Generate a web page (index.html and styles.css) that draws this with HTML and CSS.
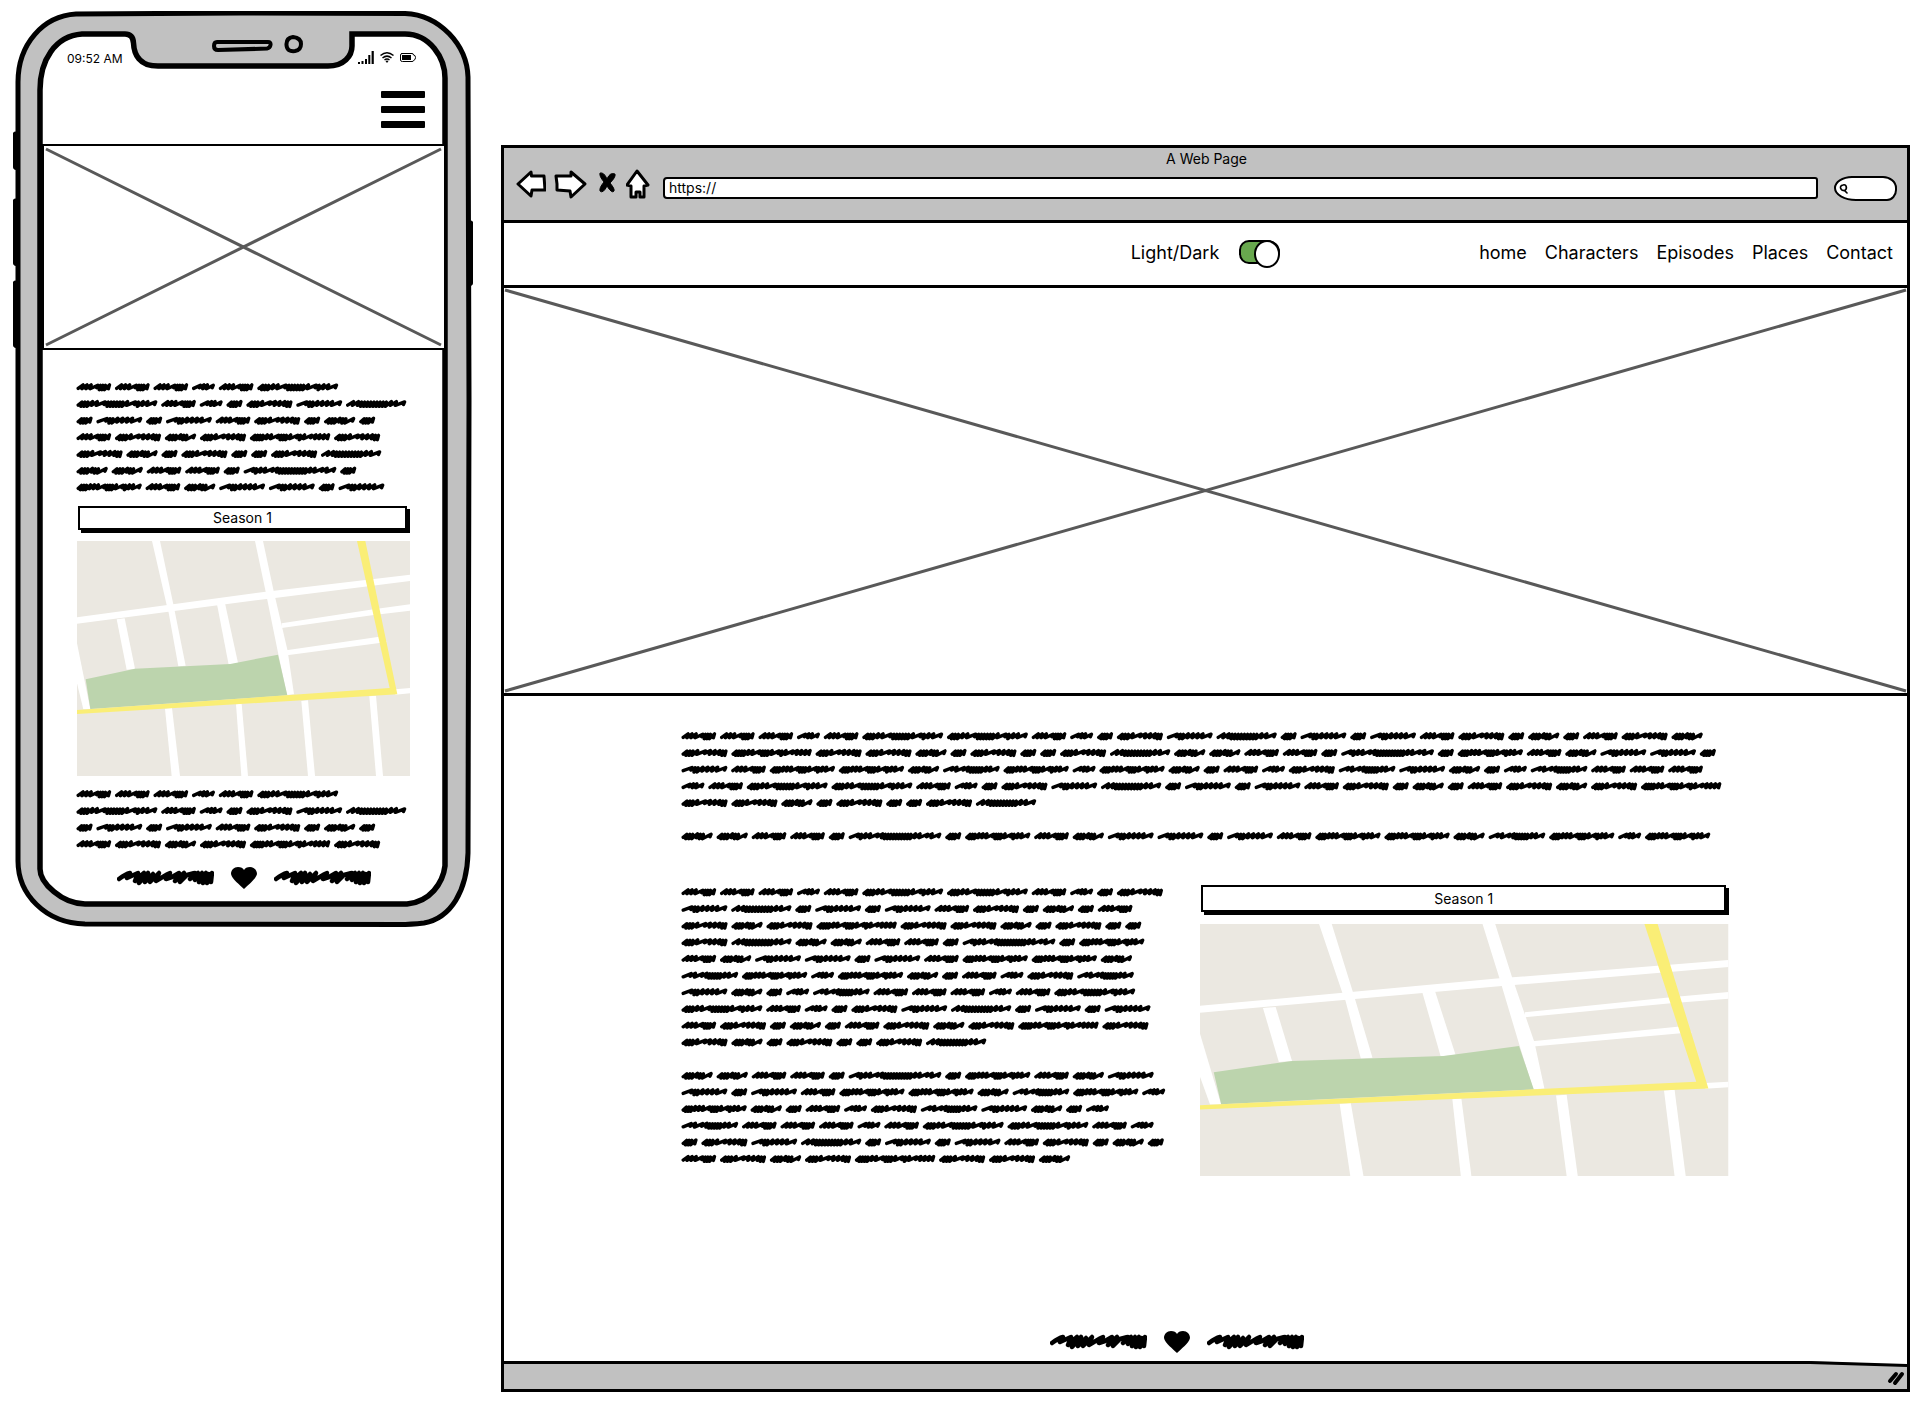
FILE: index.html
```html
<!DOCTYPE html>
<html lang="en">
<head>
<meta charset="utf-8">
<meta name="viewport" content="width=device-width, initial-scale=1">
<title>A Web Page</title>
<link rel="stylesheet" href="styles.css">
</head>
<body>
<svg class="defs" aria-hidden="true">
  <symbol id="map" viewBox="0 0 999 705" preserveAspectRatio="none">
    <rect width="999" height="705" fill="#ebe8e1"/>
    <g fill="#fff">
      <path d="M225 0H249L289 190 326 374 304 376 275 215 269 192Z"/>
      <path d="M534 0H558L590 150 632 330 651 460 630 462 604 340 566 152Z"/>
      <path d="M0 229L566 152 999 101V120L576 173 0 248Z"/>
      <path d="M614 247L890 205 999 190V209L890 222 614 261Z"/>
      <path d="M628 328L907 287 930 303 630 343Z"/>
      <path d="M119 235L143 232 174 383 149 386Z"/>
      <path d="M420 190L444 187 483 366 455 371Z"/>
      <path d="M0 307L40 505H19L0 427Z"/>
      <path d="M264 503L285 501 309 705H284Z"/>
      <path d="M477 490L494 488 513 705H493Z"/>
      <path d="M673 480L693 478 714 705H693Z"/>
      <path d="M877 466L897 464 918 705H897Z"/>
      <path d="M955 445L999 441V457L955 461Z"/>
    </g>
    <path d="M26 415L174 383 460 369 603 341 631 463 40 504Z" fill="#bcd4ad"/>
    <path d="M840 0H865L961 460 0 519V507L938 441Z" fill="#faee76"/>
  </symbol>
  <symbol id="heart" viewBox="0 0 26 22">
    <path d="M13 22C9 18 1 12 0 7C0 3 3 0 7 0C10 0 12 1 13 3C14 1 16 0 19 0C23 0 26 3 26 7C25 12 17 18 13 22Z"/>
  </symbol>
  <symbol id="mark" viewBox="0 0 97 16">
    <path fill="none" stroke="#000" stroke-width="4.500" stroke-linecap="round" stroke-linejoin="round" d="M2 9C6 6 9 4 13 3L10 8 21 3 18 11 27 3 22 13 31 3 28 12 36 4 33 12 42 3 39 11C45 8 48 5 53 3L49 9 55 7 62 3 58 11 67 3 63 12 70 5C74 4 76 3 78 3L73 9 81 3 78 10 85 3 82 12 89 3 86 13 92 4 90 13 95 3 94 12"/>
  </symbol>
</svg>

<main class="board">
  <section class="phone" aria-label="Mobile layout">
    <svg class="phone-frame" viewBox="13 11 460 915" preserveAspectRatio="none" aria-hidden="true">
      <path d="M13 133Q13 131 18 131V170Q13 170 13 167ZM13 200Q13 198 18 198V266Q13 266 13 263ZM13 282Q13 280 18 280V348Q13 348 13 345ZM473 222Q473 220 468 220V286Q473 286 473 283Z"/>
      <path fill="#c1c1c1" stroke="#000" stroke-width="5" d="M18 82C18 44 43 16 76 14L240 13 405 13.500C440 15 467 45 468 77L469 400 468 852C467 890 451 917 424 922C415 923 408 923.500 400 923.500L85 923C45 922 18 893 18 860L18 500Z"/>
      <path fill="#fff" stroke="#000" stroke-width="5.500" d="M40 90C40 60 55 36 82 34H125Q133 34 133.500 43C134 54 139 66 158 66L328 66C344 66 352 56 352 46L352 34H405C430 34 445 58 445 78V865C443 882 430 901 407 903H85C62 903 40 882 40 868Z"/>
      <path fill="none" stroke="#000" stroke-width="4" stroke-linejoin="round" d="M217 42H268Q271 42 270.500 45Q270 48 267 48.500L218 50Q214 50 214 46T217 42ZM293 37Q286 38 286.500 45T295 51Q301 50 301 44T293 37Z"/>
    </svg>
    <div class="screen">
      <div class="status">
        <span>09:52 AM</span>
        <svg width="58" height="14" viewBox="358 50 58 14" aria-hidden="true">
          <path d="M358 61h2v2h-2zM361.500 60h2v3h-2zM365 58h2v5h-2zM368.300 54h2v9h-2zM371.600 50h2.200v13h-2.200z"/>
          <path fill="none" stroke="#000" stroke-width="1.500" d="M380.500 54.500Q387 49 393.500 54.500M382.500 57Q387 53.300 391.500 57M384.500 59Q387 57 389.500 59"/>
          <path d="M385.500 60Q387 59 388.500 60L387 62Z"/>
          <path fill="none" stroke="#000" d="M401.500 52.500H412Q413.500 52.500 413.500 54Q415.500 54 415.500 56.500T413.500 59.500Q413.500 60.500 412 60.500H402.500Q400.500 60.500 400.500 59V54Q400.500 52.500 402.500 52.500Z"/>
          <path d="M402 54h9v5h-9z"/>
        </svg>
      </div>
      <button class="menu" aria-label="Open menu"><i></i><i></i><i></i></button>
      <svg class="hero hero-small" viewBox="0 0 400 202" preserveAspectRatio="none" role="img" aria-label="Image placeholder">
        <path d="M2 3L397 199M2 199L397 3"/>
      </svg>
      <div class="phone-content">
        <svg class="scribble" data-lines="aaanaL LaniesM isisaeioi aeoeKe eoieiieM ooaaiTi Paossis" role="img" aria-label="Body text"></svg>
        <button class="season">Season 1</button>
        <svg class="map map-small" role="img" aria-label="Map"><use href="#map"/></svg>
        <svg class="scribble" data-lines="aaanaL LaniesM isisaeioi aeoeKe" role="img" aria-label="Body text"></svg>
      </div>
      <div class="credit">
        <svg class="mark"><use href="#mark"/></svg>
        <svg class="heart"><use href="#heart"/></svg>
        <svg class="mark"><use href="#mark"/></svg>
      </div>
    </div>
  </section>

  <section class="browser" aria-label="Desktop layout">
    <header class="chrome">
      <div class="title">A Web Page</div>
      <div class="toolbar">
        <button class="tool" aria-label="Back"><svg width="30" height="32" viewBox="0 0 30 32"><path d="M2 15L15 3 15.500 7 28 7 29 21 16 21 15 27Z"/></svg></button>
        <button class="tool" aria-label="Forward"><svg width="34" height="32" viewBox="0 0 34 32"><path d="M2 7L17 7 17 3 31 15 17 28 16 22 3 21 3 15Z"/></svg></button>
        <button class="tool" aria-label="Stop"><svg width="22" height="32" viewBox="0 0 22 32"><path class="solid" d="M4 4Q8 3 11 10Q14 3 19 5Q20 8 14 14Q19 20 18 22Q16 25 11 17Q7 25 4 22Q3 19 8 13Q3 7 4 4Z"/></svg></button>
        <button class="tool" aria-label="Home"><svg width="25" height="32" viewBox="0 0 25 32"><path d="M11 2L22 16 18 17 18 28 14 28 14 23 10 23 10 28 5 28 5 17 1 16Z"/></svg></button>
        <input class="url" type="text" value="https://" aria-label="Address">
        <label class="search">
          <svg width="12" height="14" viewBox="0 0 12 14" aria-hidden="true"><path d="M5 2Q1 3 2 6T7 9Q10 7 9 4T5 2ZM7 9L10 12"/></svg>
          <input type="search" aria-label="Search">
        </label>
      </div>
    </header>
    <div class="navbar">
      <label class="theme">Light/Dark <input type="checkbox" checked></label>
      <nav>
        <a href="#">home</a>
        <a href="#">Characters</a>
        <a href="#">Episodes</a>
        <a href="#">Places</a>
        <a href="#">Contact</a>
      </nav>
    </div>
    <svg class="hero hero-wide" viewBox="0 0 1403 406" preserveAspectRatio="none" role="img" aria-label="Image placeholder">
      <path d="M1 2L1402 404M1 404L1402 2"/>
    </svg>
    <div class="content">
      <svg class="scribble" data-lines="aaanaLLaniesMisisaeioiaeo eKeeoieiieMooaaiTiPaossi saPPoRPnPoianeRsoinRaaa naLLaniesMisisaeioiaeoeK eeoieiieM - ooaaiTiPaossisaPPoRPnP" role="img" aria-label="Introduction text"></svg>
      <div class="columns">
        <svg class="scribble" data-lines="aaanaLLanie sMisisaeioia eoeKeeoieii eMooaaiTiP aossisaPPo RPnPoianeR soinRaaanaL LaniesMisis aeioiaeoeKe eoieiieM - ooaaiTiPaos sisaPPoRPn PoianeRsoin RaaanaLLan iesMisisaeioi aeoeKeeo" role="img" aria-label="Body text"></svg>
        <div class="side">
          <button class="season season-wide">Season 1</button>
          <svg class="map map-wide" role="img" aria-label="Map"><use href="#map"/></svg>
        </div>
      </div>
    </div>
    <div class="credit credit-wide">
      <svg class="mark"><use href="#mark"/></svg>
      <svg class="heart"><use href="#heart"/></svg>
      <svg class="mark"><use href="#mark"/></svg>
    </div>
    <footer class="statusbar">
      <span></span>
      <svg width="97" height="28" viewBox="0 0 97 28" aria-hidden="true">
        <path fill="#fff" d="M0 0H97V4Z"/>
        <path fill="none" stroke="#000" stroke-width="3" d="M0 1.500L97 4.500"/>
        <path fill="none" stroke="#000" stroke-width="4" stroke-linecap="round" d="M80 20L86 13M85 22L92 13"/>
      </svg>
    </footer>
  </section>
</main>
<script src="script.js"></script>
</body>
</html>
```
FILE: styles.css
```css
* { box-sizing: border-box; }

body {
  margin: 0;
  background: #fff;
  color: #000;
  font-family: Inter, "Liberation Sans", sans-serif;
  font-size: 14px;
}

button, input {
  font: inherit;
  color: inherit;
}

svg { display: block; }

.defs { position: absolute; width: 0; height: 0; }

.board {
  display: flex;
  gap: 28px;
  min-height: 100vh;
  padding: 11px 10px 12px 13px;
}

/* phone */
.phone {
  position: relative;
  flex: none;
  align-self: flex-start;
  width: 460px;
}

.phone-frame {
  position: absolute;
  inset: 0;
  width: 100%;
  height: 100%;
}

.screen {
  position: relative;
  display: flex;
  flex-direction: column;
  padding: 36px 27px 38px 29px;
}

.status {
  display: flex;
  justify-content: space-between;
  align-items: center;
  height: 22px;
  padding: 0 30px 0 25px;
  font-size: 12px;
}

.menu {
  display: flex;
  flex-direction: column;
  justify-content: space-between;
  align-self: flex-end;
  width: 44px;
  height: 37px;
  margin: 22px 21px 16px 0;
  padding: 0;
  border: 0;
  background: none;
}

.menu i {
  height: 7px;
  border-radius: 1px;
  background: #000;
}

.hero {
  border: 2px solid #000;
  background: #fff;
}

.hero path {
  fill: none;
  stroke: #595959;
  stroke-width: 3;
  vector-effect: non-scaling-stroke;
}

.hero-small { width: 100%; height: 206px; }

.phone-content {
  display: flex;
  flex-direction: column;
  gap: 10px;
  padding: 29px 36px 0 35px;
}

.scribble {
  overflow: visible;
  fill: none;
  stroke: #000;
  stroke-width: 3.4;
  stroke-linecap: round;
  stroke-linejoin: round;
}

.season {
  height: 24px;
  margin: 0 3px 1px 1px;
  padding: 0;
  border: 2px solid #000;
  background: #fff;
  box-shadow: 3px 3px 0 #000;
  line-height: 20px;
}

.map { width: 100%; }
.map-small { height: 235px; }

.credit {
  display: flex;
  justify-content: center;
  align-items: center;
  gap: 17px;
  margin-top: 14px;
}

.mark { width: 97px; height: 16px; }
.heart { width: 26px; height: 22px; }

/* browser window */
.browser {
  display: flex;
  flex: 1;
  flex-direction: column;
  min-width: 0;
  margin-top: 134px;
  border: 3px solid #000;
}

.chrome {
  padding: 1px 10px 19px 12px;
  border-bottom: 3px solid #000;
  background: #c1c1c1;
}

.title {
  text-align: center;
  line-height: 20px;
}

.toolbar {
  display: flex;
  align-items: flex-end;
  gap: 8px;
}

.tool {
  padding: 0;
  border: 0;
  background: none;
}

.tool path {
  fill: #fff;
  stroke: #000;
  stroke-width: 3;
  stroke-linejoin: round;
}

.tool .solid { fill: #000; stroke-width: 1; }

.url {
  flex: 1;
  min-width: 0;
  height: 22px;
  margin: 0 8px 2px 4px;
  padding: 0 4px 2px;
  border: 2px solid #000;
  border-radius: 4px 3px 3px 4px;
  background: #fff;
}

.search {
  display: flex;
  align-items: center;
  width: 63px;
  height: 25px;
  padding: 0 3px;
  border: 2px solid #000;
  border-radius: 18px 14px 10px 22px / 12px 12px 11px 13px;
  background: #fff;
}

.search path {
  fill: none;
  stroke: #000;
  stroke-width: 2;
  stroke-linecap: round;
}

.search input {
  width: 100%;
  min-width: 0;
  border: 0;
  outline: 0;
  background: none;
}

.navbar {
  display: grid;
  grid-template-columns: 1fr auto 1fr;
  align-items: center;
  height: 62px;
  padding: 0 14px 4px;
  font-size: 18px;
}

.theme {
  display: flex;
  grid-column: 2;
  align-items: center;
  gap: 20px;
}

.theme input {
  position: relative;
  appearance: none;
  width: 41px;
  height: 24px;
  margin: 0;
  border: 2px solid #000;
  border-radius: 10px 12px 12px 10px;
  background: #68a84e;
}

.theme input::before {
  content: "";
  position: absolute;
  top: -2px;
  left: -2px;
  width: 22px;
  height: 24px;
  border: 2px solid #000;
  border-radius: 50%;
  background: #fff;
}

.theme input:checked::before { right: -2px; left: auto; }

nav {
  display: flex;
  justify-content: flex-end;
  gap: 18px;
}

nav a {
  color: inherit;
  text-decoration: none;
}

.hero-wide {
  width: calc(100% + 6px);
  height: 411px;
  margin: 0 -3px;
  border-width: 3px;
}

.content {
  display: flex;
  flex-direction: column;
  gap: 39px;
  width: 100%;
  max-width: 1047px;
  margin: 0 auto;
  padding-top: 32px;
}

.columns {
  display: grid;
  grid-template-columns: minmax(0, 490fr) minmax(0, 528fr);
  gap: 28px;
}

.side {
  display: flex;
  flex-direction: column;
  gap: 11px;
  padding-top: 1px;
}

.season-wide { height: 27px; }
.map-wide { height: 252px; }

.credit-wide {
  margin-top: auto;
  padding: 16px 58px 8px 0;
}

.statusbar {
  display: flex;
  height: 28px;
  background: #c1c1c1;
}

.statusbar span {
  flex: 1;
  border-top: 3px solid #000;
}

@media (max-width: 1200px) {
  .board { flex-direction: column; }
  .browser { margin-top: 0; }
}
```
FILE: script.js
```js
// Scribbled words: [advance in px, stroke pattern].
// "~" wide arch, "u" open zigzag, "q" dense low zigzag.
const WORDS = {
  a: [38.5, "uuu~qqqu"],
  n: [26.8, "~uu~"],
  i: [19.9, "qqqu"],
  e: [49.9, "qqqu~uuuqq"],
  s: [49.7, "~qquuuu~"],
  o: [35.1, "qqquqq~"],
  L: [84.7, "qqquu~qqqqqqu~quu~"],
  K: [84.2, "qqqquu~qqqu~qu~uuuu"],
  M: [64.1, "uuqqqqqqqqquu~"],
  R: [60.5, "~u~uqqqqquu~"],
  P: [69.1, "qqquuu~qqqu~quu~"],
  T: [96.6, "~quu~uqqqqqqqqqquu~u~"]
};
const STEP = { "~": 6.6, u: 4, q: 2.5 };
const RISE = { "~": 1.8, u: 2.1, q: 1.6 };
const DROP = { "~": 0.8, u: 1.7, q: 2.7 };
const LINE = 16.67;
const GAP = 5;

function drawWord(x, y, [advance, pattern]) {
  const width = advance - GAP - 3;
  const total = [...pattern].reduce((sum, c) => sum + STEP[c], 0);
  const scale = width / total;
  let at = x + 1.2;
  let d = `M${at.toFixed(1)} ${(y + 1.4).toFixed(1)}`;
  for (const c of pattern) {
    const next = at + STEP[c] * scale;
    d += `L${(next + 0.8).toFixed(1)} ${(y - RISE[c]).toFixed(1)}`;
    d += `L${(next - 0.3).toFixed(1)} ${(y + DROP[c]).toFixed(1)}`;
    at = next;
  }
  return d;
}

for (const svg of document.querySelectorAll(".scribble")) {
  const lines = svg.dataset.lines.split(" ");
  let d = "";
  lines.forEach((line, row) => {
    if (line === "-") return;
    let x = 0;
    for (const c of line) {
      d += drawWord(x, 8 + row * LINE, WORDS[c]);
      x += WORDS[c][0];
    }
  });
  const path = document.createElementNS("http://www.w3.org/2000/svg", "path");
  path.setAttribute("d", d);
  svg.append(path);
  svg.setAttribute("width", "100%");
  svg.setAttribute("height", Math.round(lines.length * LINE));
}
```
